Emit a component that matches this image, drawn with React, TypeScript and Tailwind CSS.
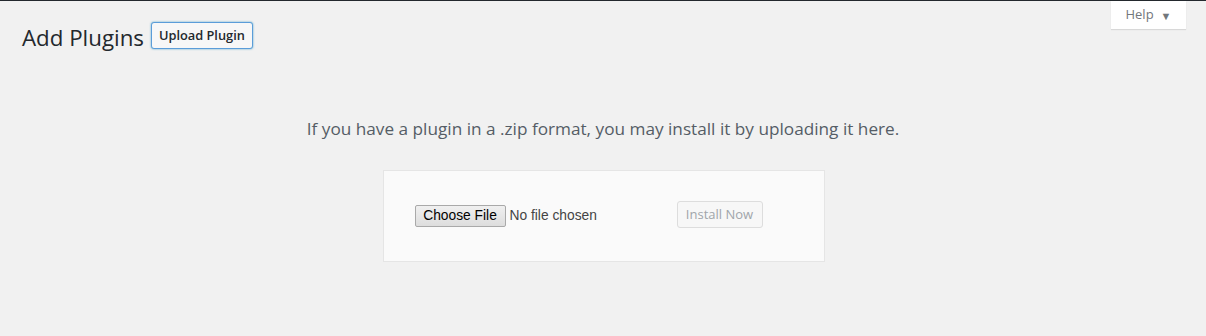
import React from 'react';

const App: React.FC = () => {
  return (
    <div className="w-full h-[336px] bg-[#f1f1f1] font-['Open_Sans',sans-serif] overflow-hidden">
      {/* admin bar edge */}
      <div className="h-px bg-[#23282d]" />

      {/* Header row */}
      <div className="flex justify-between items-start pl-[22px] pr-[20px]">
        <div className="flex items-start gap-[7px] mt-[21px]">
          <h1 className="mt-[1px] text-[22.3px] leading-[29px] text-[#23282d] font-normal">Add Plugins</h1>
          <button className="h-[27px] px-[7px] border border-[#5b9dd9] bg-[#f7f7f7] rounded-[3px] text-[12.8px] font-semibold text-[#23282d] shadow-[0_0_2px_rgba(30,140,190,0.8)]">
            Upload Plugin
          </button>
        </div>
        <button className="w-[75px] h-[28px] bg-white shadow-[0_1px_1px_rgba(0,0,0,0.1)] text-[13px] text-[#72777c] flex items-center justify-center gap-[7px]">
          Help
          <span className="text-[11px] leading-none">▼</span>
        </button>
      </div>

      {/* Upload area */}
      <div className="flex flex-col items-center">
        <p className="mt-[65px] text-[17.2px] leading-[24px] text-[#555d66]">
          If you have a plugin in a .zip format, you may install it by uploading it here.
        </p>
        <form className="mt-[29px] ml-[1px] w-[442px] h-[92px] bg-[#fafafa] border border-[#e5e5e5] pl-[31px] pt-[30px] flex items-start">
          <label className="w-[253px] mt-[4px] flex items-center font-['Liberation_Sans',sans-serif] text-[13.8px] cursor-pointer">
            <span className="h-[22px] w-[91px] flex items-center justify-center border border-[#a9a9a9] rounded-[2px] bg-gradient-to-b from-[#f0f0f0] to-[#dddddd] text-black">
              Choose File
            </span>
            <span className="ml-[4px] text-[#444]">No file chosen</span>
            <input type="file" className="hidden" />
          </label>
          <button
            type="button"
            disabled
            className="ml-[9px] w-[86px] h-[27px] border border-[#ddd] bg-[#f7f7f7] rounded-[3px] text-[13px] text-[#a0a5aa]"
          >
            Install Now
          </button>
        </form>
      </div>
    </div>
  );
};

export default App;
